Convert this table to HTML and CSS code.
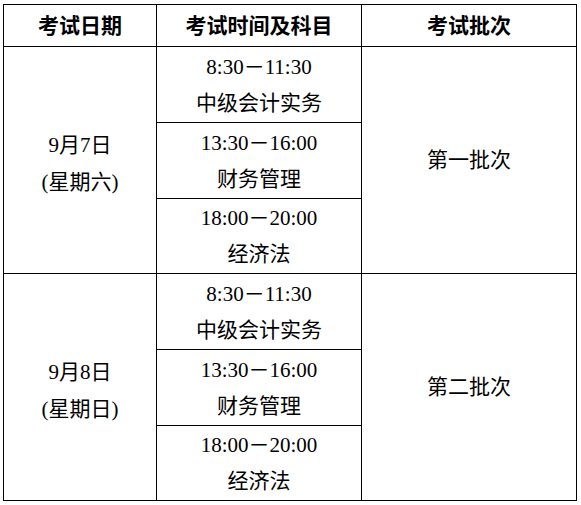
FILE: index.html
```html
<!DOCTYPE html>
<html lang="zh-CN">
<head>
<meta charset="utf-8">
<title>考试安排</title>
<link rel="stylesheet" href="styles.css">
</head>
<body>
<table class="schedule">
  <colgroup>
    <col class="c-date">
    <col class="c-time">
    <col class="c-batch">
  </colgroup>
  <thead>
    <tr class="head-row">
      <th>考试日期</th>
      <th>考试时间及科目</th>
      <th>考试批次</th>
    </tr>
  </thead>
  <tbody>
    <tr class="row-a">
      <td rowspan="3" class="date"><div class="line">9月7日</div><div class="line">(星期六)</div></td>
      <td class="slot"><div class="line">8:30－11:30</div><div class="line">中级会计实务</div></td>
      <td rowspan="3" class="batch">第一批次</td>
    </tr>
    <tr class="row-a">
      <td class="slot"><div class="line">13:30－16:00</div><div class="line">财务管理</div></td>
    </tr>
    <tr class="row-b">
      <td class="slot"><div class="line">18:00－20:00</div><div class="line">经济法</div></td>
    </tr>
    <tr class="row-a">
      <td rowspan="3" class="date"><div class="line">9月8日</div><div class="line">(星期日)</div></td>
      <td class="slot"><div class="line">8:30－11:30</div><div class="line">中级会计实务</div></td>
      <td rowspan="3" class="batch">第二批次</td>
    </tr>
    <tr class="row-a">
      <td class="slot"><div class="line">13:30－16:00</div><div class="line">财务管理</div></td>
    </tr>
    <tr class="row-b">
      <td class="slot"><div class="line">18:00－20:00</div><div class="line">经济法</div></td>
    </tr>
  </tbody>
</table>
</body>
</html>
```

FILE: styles.css
```css
html, body {
  margin: 0;
  padding: 0;
  background: #ffffff;
}

body {
  padding: 4px 0 0 3px;
  font-family: "Liberation Serif", "Noto Sans CJK SC", serif;
  color: #000000;
  font-size: 21px;
}

.schedule {
  border-collapse: collapse;
  table-layout: fixed;
  width: 573px;
}

.c-date { width: 153px; }
.c-time { width: 205px; }
.c-batch { width: 215px; }

.schedule th,
.schedule td {
  border: 1px solid #000000;
  padding: 0;
  text-align: center;
  vertical-align: middle;
}

.schedule th {
  font-weight: bold;
  line-height: 24px;
}

.head-row { height: 42px; }
.row-a { height: 76px; }
.row-b { height: 75px; }

.line {
  line-height: 37px;
}

.slot .line:first-child {
  line-height: 35px;
  margin-top: 2px;
}

.date .line:first-child {
  margin-top: 8px;
}

.batch {
  line-height: 37px;
  padding-top: 4px;
}
```
